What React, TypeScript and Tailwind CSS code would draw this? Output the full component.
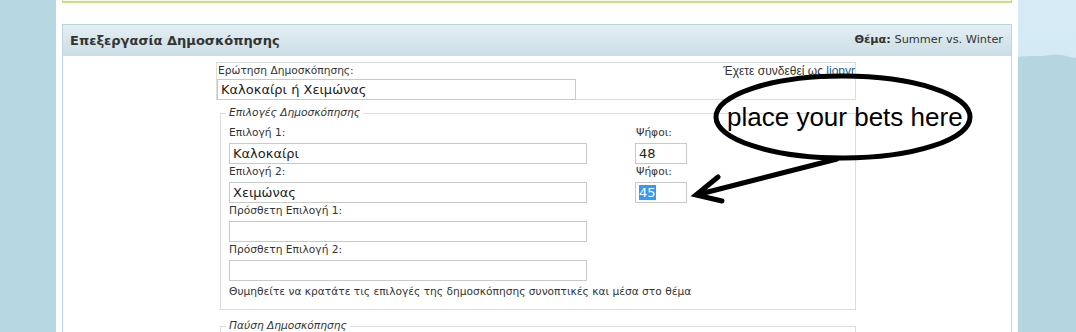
import React from "react";

const label = "block h-[16px] leading-[16px] text-[10.65px] text-[#333] [font-family:'DejaVu_Sans',Verdana,sans-serif]";
const field =
  "h-[21px] border border-[#c9c9c9] bg-white pl-[3px] text-[13px] leading-[19px] text-[#222] [font-family:'DejaVu_Sans',Verdana,sans-serif] whitespace-nowrap overflow-hidden";

function Row({ name, value, votes, selected }: { name: string; value?: string; votes?: string; selected?: boolean }) {
  return (
    <div className="flex">
      <div className="w-[406px]">
        <span className={label}>{name}</span>
        <div className={`${field} mt-[2px] w-[358px]`}>{value}</div>
      </div>
      {votes !== undefined && (
        <div>
          <span className={`${label} pl-[1px]`}>Ψήφοι:</span>
          <div className={`${field} mt-[2px] w-[52px] pl-[1px]`}>
            {selected ? <span className="bg-[#3399ff] text-white">{votes}</span> : votes}
          </div>
        </div>
      )}
    </div>
  );
}

export default function App() {
  return (
    <div className="relative flex h-[332px] w-[1076px] overflow-hidden bg-[#b7d7e2]">
      {/* left backdrop */}
      <div className="w-[56px] shrink-0 bg-[#b7d7e2]" />

      {/* page column */}
      <div className="w-[962px] shrink-0 bg-white px-[6px]">
        <div className="h-[3px] border-x border-b-2 border-[#c9dc8f] bg-[#f8fbe8]" />

        <div className="mt-[21px] h-[400px] border border-[#bcd5de]">
          <div className="flex h-[31px] items-center justify-between bg-gradient-to-b from-[#e5eff3] to-[#cadde5] pl-[7px] pr-[8px] text-[#333] [font-family:'DejaVu_Sans',Verdana,sans-serif]">
            <span className="text-[13px] font-bold">Επεξεργασία Δημοσκόπησης</span>
            <span className="text-[11.3px]">
              <b>Θέμα:</b> Summer vs. Winter
            </span>
          </div>

          <div className="pl-[153px] pt-[6px]">
            {/* question row */}
            <div className="flex h-[38px] w-[640px] justify-between border border-[#dcdcdc]">
              <div>
                <span className={`${label} h-[15px] leading-[15px] pl-[1px]`}>Ερώτηση Δημοσκόπησης:</span>
                <div className={`${field} w-[359px]`}>Καλοκαίρι ή Χειμώνας</div>
              </div>
              <span className="pt-[1px] text-[12px] leading-[14px] text-[#333] [font-family:'Liberation_Sans',Arial,sans-serif]">
                Έχετε συνδεθεί ως <a className="text-[#2a5d8a] underline">liopyr</a>
              </span>
            </div>

            {/* options */}
            <fieldset className="ml-[4px] mt-[6px] w-[636px] border border-[#dcdcdc] pb-[9px] pl-[8px] pt-[5px]">
              <legend className="-ml-[3px] px-[3px] text-[10.65px] italic leading-[14px] text-[#333] [font-family:'DejaVu_Sans',Verdana,sans-serif]">
                Επιλογές Δημοσκόπησης
              </legend>
              <Row name="Επιλογή 1:" value="Καλοκαίρι" votes="48" />
              <Row name="Επιλογή 2:" value="Χειμώνας" votes="45" selected />
              <Row name="Πρόσθετη Επιλογή 1:" />
              <Row name="Πρόσθετη Επιλογή 2:" />
              <p className={`${label} mt-[3px]`}>
                Θυμηθείτε να κρατάτε τις επιλογές της δημοσκόπησης συνοπτικές και μέσα στο θέμα
              </p>
            </fieldset>

            <fieldset className="ml-[4px] mt-[9px] h-[60px] w-[636px] border border-[#dcdcdc] pl-[8px]">
              <legend className="-ml-[3px] px-[3px] text-[10.65px] italic leading-[14px] text-[#333] [font-family:'DejaVu_Sans',Verdana,sans-serif]">
                Παύση Δημοσκόπησης
              </legend>
            </fieldset>
          </div>
        </div>
      </div>

      {/* right backdrop with hills */}
      <div className="flex-1 bg-gradient-to-b from-[#d6ebf6] to-[#c9e3ef]">
        <svg width="58" height="332" viewBox="0 0 58 332" className="block">
          <path d="M0 57 C12 55 22 57 32 55 C42 53 50 57 58 58 L58 332 L0 332 Z" fill="#b5d5e1" />
        </svg>
      </div>

      {/* annotation drawn on top of the screenshot */}
      <svg className="pointer-events-none absolute left-0 top-0" width="1076" height="332" viewBox="0 0 1076 332">
        <ellipse cx="843" cy="117" rx="127" ry="41" fill="none" stroke="#000" strokeWidth="5" />
        <text x="727" y="126" fontSize="26" fill="#000" fontFamily="'Liberation Sans', Arial, sans-serif">
          place your bets here
        </text>
        <path d="M837 159 L696 195 M718 177 L696 195 L722 201" fill="none" stroke="#000" strokeWidth="5" strokeLinecap="round" strokeLinejoin="miter" />
      </svg>
    </div>
  );
}
